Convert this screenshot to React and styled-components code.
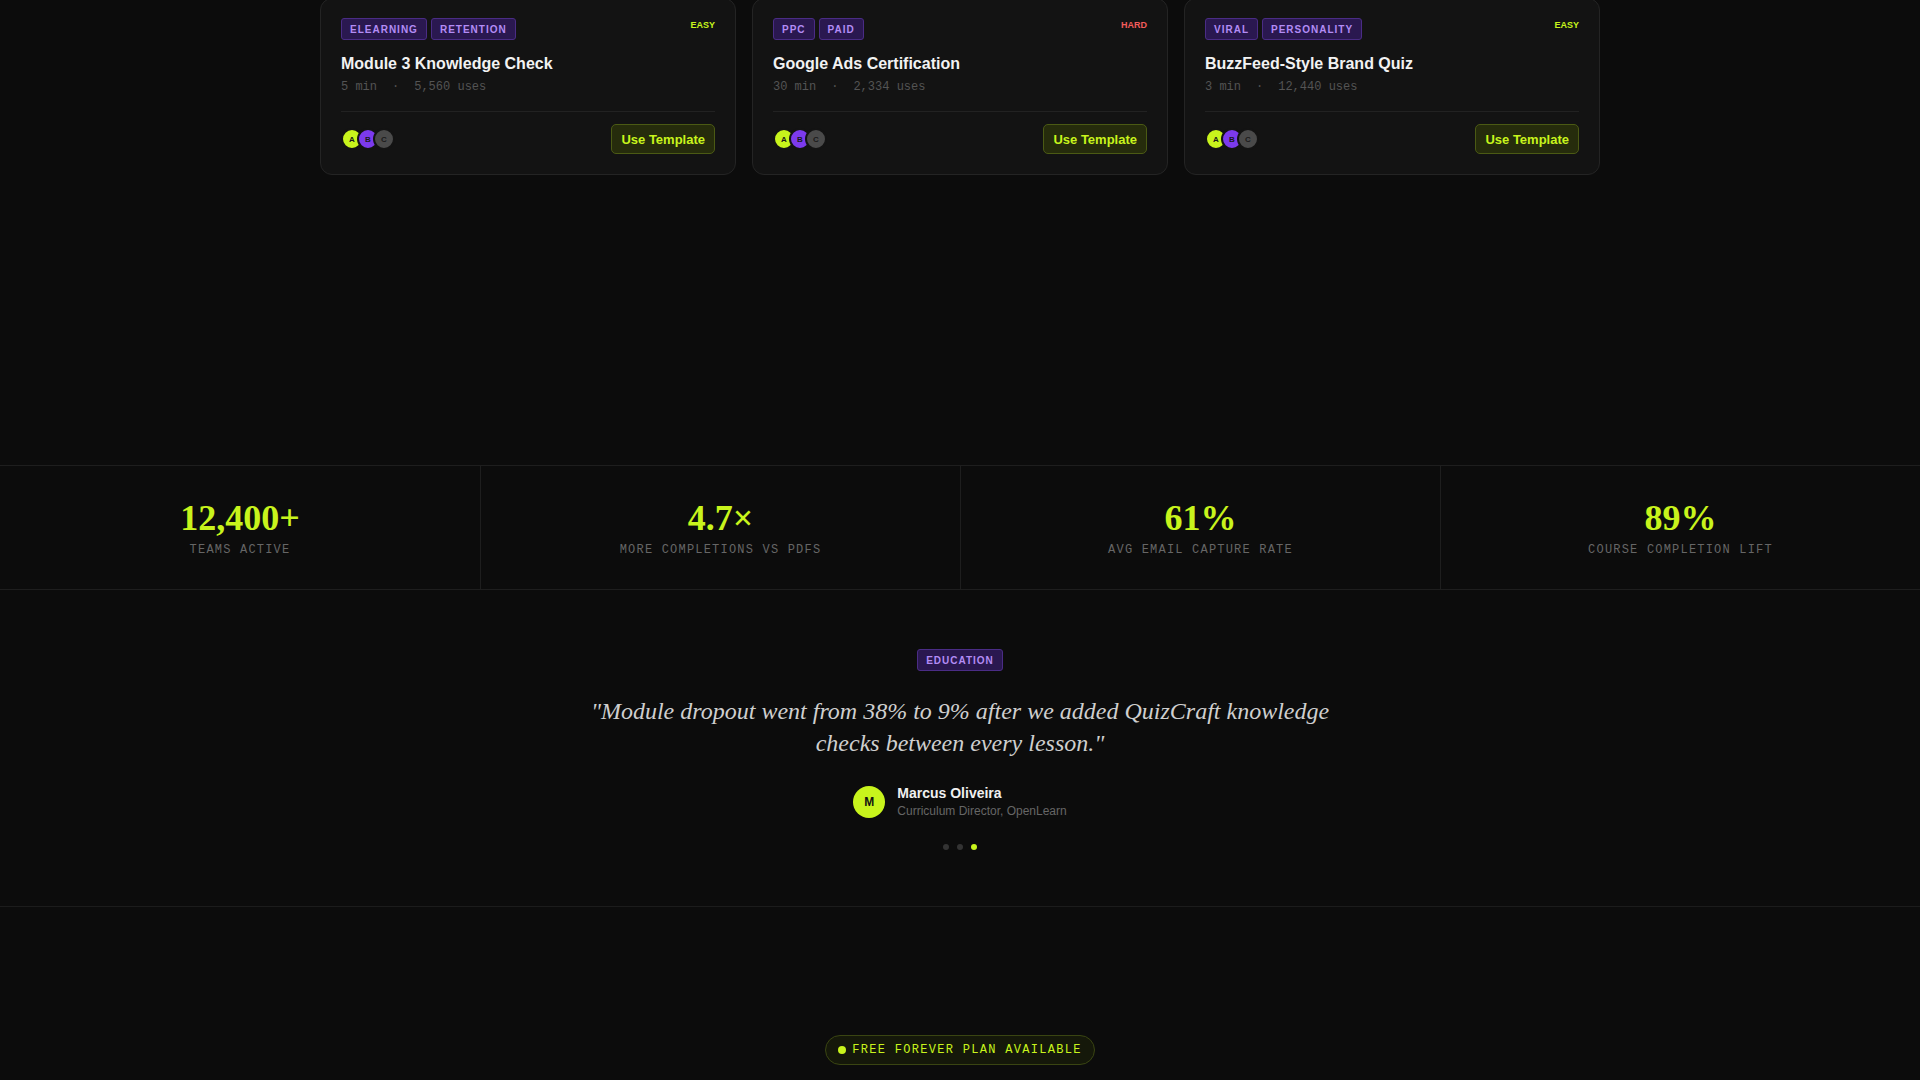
import React from "react";
import styled, { createGlobalStyle } from "styled-components";

const LIME = "#c8f41c";

const GlobalStyle = createGlobalStyle`
  html, body {
    margin: 0;
    padding: 0;
    background: #0c0c0c;
    color: #e8e8e8;
    font-family: "Liberation Sans", Arial, sans-serif;
  }
  * { box-sizing: border-box; }
`;

const templates = [
  { tags: ["ELEARNING", "RETENTION"], level: "EASY", title: "Module 3 Knowledge Check", time: "5 min", uses: "5,560 uses" },
  { tags: ["PPC", "PAID"], level: "HARD", title: "Google Ads Certification", time: "30 min", uses: "2,334 uses" },
  { tags: ["VIRAL", "PERSONALITY"], level: "EASY", title: "BuzzFeed-Style Brand Quiz", time: "3 min", uses: "12,440 uses" },
];

const stats = [
  { value: "12,400+", label: "TEAMS ACTIVE" },
  { value: "4.7×", label: "MORE COMPLETIONS VS PDFS" },
  { value: "61%", label: "AVG EMAIL CAPTURE RATE" },
  { value: "89%", label: "COURSE COMPLETION LIFT" },
];

const App = () => {
  return (
    <Page>
      <GlobalStyle />
      <CardsSection>
        <CardGrid>
          {templates.map((t) => (
            <Card key={t.title}>
              <CardTop>
                <Tags>
                  {t.tags.map((tag) => (
                    <Tag key={tag}>{tag}</Tag>
                  ))}
                </Tags>
                <Level $hard={t.level === "HARD"}>{t.level}</Level>
              </CardTop>
              <CardTitle>{t.title}</CardTitle>
              <Meta>
                {t.time}
                <Sep>·</Sep>
                {t.uses}
              </Meta>
              <CardFooter>
                <Avatars>
                  <Mini $bg={LIME}>A</Mini>
                  <Mini $bg="#7c3aed">B</Mini>
                  <Mini $bg="#4a4a4a">C</Mini>
                </Avatars>
                <UseButton>Use Template</UseButton>
              </CardFooter>
            </Card>
          ))}
        </CardGrid>
      </CardsSection>

      <StatsBand>
        {stats.map((s) => (
          <StatCell key={s.label}>
            <StatValue>{s.value}</StatValue>
            <StatLabel>{s.label}</StatLabel>
          </StatCell>
        ))}
      </StatsBand>

      <Testimonial>
        <Tag>EDUCATION</Tag>
        <Quote>
          "Module dropout went from 38% to 9% after we added QuizCraft knowledge
          checks between every lesson."
        </Quote>
        <Author>
          <AuthorAvatar>M</AuthorAvatar>
          <AuthorInfo>
            <AuthorName>Marcus Oliveira</AuthorName>
            <AuthorRole>Curriculum Director, OpenLearn</AuthorRole>
          </AuthorInfo>
        </Author>
        <Dots>
          <Dot />
          <Dot />
          <Dot $active />
        </Dots>
      </Testimonial>

      <CtaSection>
        <Pill>
          <PillDot />
          FREE FOREVER PLAN AVAILABLE
        </Pill>
      </CtaSection>
    </Page>
  );
};

const Page = styled.div`
  min-height: 1080px;
  background: #0c0c0c;
  overflow: hidden;
`;

const CardsSection = styled.section`
  margin-top: -2px;
  padding-bottom: 290px;
`;

const CardGrid = styled.div`
  width: 1280px;
  margin: 0 auto;
  display: grid;
  grid-template-columns: repeat(3, 1fr);
  gap: 16px;
`;

const Card = styled.div`
  background: #131313;
  border: 1px solid #242424;
  border-radius: 12px;
  padding: 19px 20px 20px;
`;

const CardTop = styled.div`
  display: flex;
  justify-content: space-between;
  align-items: flex-start;
`;

const Tags = styled.div`
  display: flex;
  gap: 4px;
`;

const Tag = styled.span`
  display: inline-flex;
  align-items: center;
  height: 22px;
  padding: 0 8px;
  background: #2a1850;
  border: 1px solid #4a2c85;
  border-radius: 3px;
  color: #b38cf5;
  font-size: 10px;
  font-weight: 700;
  letter-spacing: 1px;
`;

const Level = styled.span`
  font-size: 9px;
  font-weight: 700;
  margin-top: 2px;
  color: ${(p) => (p.$hard ? "#f25c5c" : LIME)};
`;

const CardTitle = styled.h3`
  margin: 13px 0 0;
  font-size: 16px;
  line-height: 22px;
  font-weight: 700;
  color: #f2f2f2;
`;

const Meta = styled.div`
  margin-top: 4px;
  font-family: "Liberation Mono", "DejaVu Sans Mono", monospace;
  font-size: 12px;
  line-height: 16px;
  color: #545454;
`;

const Sep = styled.span`
  margin: 0 15px;
`;

const CardFooter = styled.div`
  margin-top: 16px;
  padding-top: 12px;
  border-top: 1px solid #222;
  display: flex;
  justify-content: space-between;
  align-items: center;
`;

const Avatars = styled.div`
  display: flex;
`;

const Mini = styled.span`
  width: 22px;
  height: 22px;
  border-radius: 50%;
  background: ${(p) => p.$bg};
  border: 2px solid #131313;
  margin-left: -6px;
  display: flex;
  align-items: center;
  justify-content: center;
  font-size: 8px;
  font-weight: 700;
  color: #1a1a1a;
  &:first-child {
    margin-left: 0;
  }
`;

const UseButton = styled.button`
  height: 30px;
  padding: 0 9px;
  background: #262c0c;
  border: 1px solid #4b5a14;
  border-radius: 5px;
  color: ${LIME};
  font-family: "Liberation Sans", Arial, sans-serif;
  font-size: 13px;
  font-weight: 700;
  cursor: pointer;
`;

const StatsBand = styled.section`
  display: grid;
  grid-template-columns: repeat(4, 1fr);
  border-top: 1px solid #1e1e1e;
  border-bottom: 1px solid #1e1e1e;
`;

const StatCell = styled.div`
  padding: 32px 0 31px;
  text-align: center;
  border-left: 1px solid #1e1e1e;
  &:first-child {
    border-left: none;
  }
`;

const StatValue = styled.div`
  font-family: "Liberation Serif", "Times New Roman", serif;
  font-size: 36px;
  line-height: 40px;
  font-weight: 700;
  color: ${LIME};
`;

const StatLabel = styled.div`
  margin-top: 4px;
  font-family: "Liberation Mono", "DejaVu Sans Mono", monospace;
  font-size: 12px;
  line-height: 16px;
  letter-spacing: 1.2px;
  color: #666;
`;

const Testimonial = styled.section`
  display: flex;
  flex-direction: column;
  align-items: center;
  padding: 59px 0 56px;
  border-bottom: 1px solid #1c1c1c;
`;

const Quote = styled.blockquote`
  margin: 24px 0 0;
  max-width: 760px;
  text-align: center;
  font-family: "Liberation Serif", "Times New Roman", serif;
  font-style: italic;
  font-size: 24px;
  line-height: 32px;
  color: #cfcfcf;
`;

const Author = styled.div`
  margin-top: 26px;
  display: flex;
  align-items: center;
  gap: 12px;
`;

const AuthorAvatar = styled.div`
  width: 32px;
  height: 32px;
  border-radius: 50%;
  background: ${LIME};
  color: #111;
  font-size: 12px;
  font-weight: 700;
  display: flex;
  align-items: center;
  justify-content: center;
`;

const AuthorInfo = styled.div`
  display: flex;
  flex-direction: column;
`;

const AuthorName = styled.div`
  font-size: 14px;
  line-height: 17px;
  font-weight: 700;
  color: #f0f0f0;
`;

const AuthorRole = styled.div`
  margin-top: 1px;
  font-size: 12px;
  line-height: 16px;
  color: #666;
`;

const Dots = styled.div`
  margin-top: 25px;
  display: flex;
  gap: 8px;
`;

const Dot = styled.span`
  width: 6px;
  height: 6px;
  border-radius: 50%;
  background: ${(p) => (p.$active ? LIME : "#333")};
`;

const CtaSection = styled.section`
  display: flex;
  justify-content: center;
  padding-top: 128px;
`;

const Pill = styled.div`
  display: inline-flex;
  align-items: center;
  gap: 6px;
  height: 30px;
  padding: 0 12px;
  border-radius: 15px;
  background: #15180a;
  border: 1px solid #3a4512;
  color: ${LIME};
  font-family: "Liberation Mono", "DejaVu Sans Mono", monospace;
  font-size: 12px;
  letter-spacing: 1.3px;
`;

const PillDot = styled.span`
  width: 8px;
  height: 8px;
  border-radius: 50%;
  background: ${LIME};
`;

export default App;
